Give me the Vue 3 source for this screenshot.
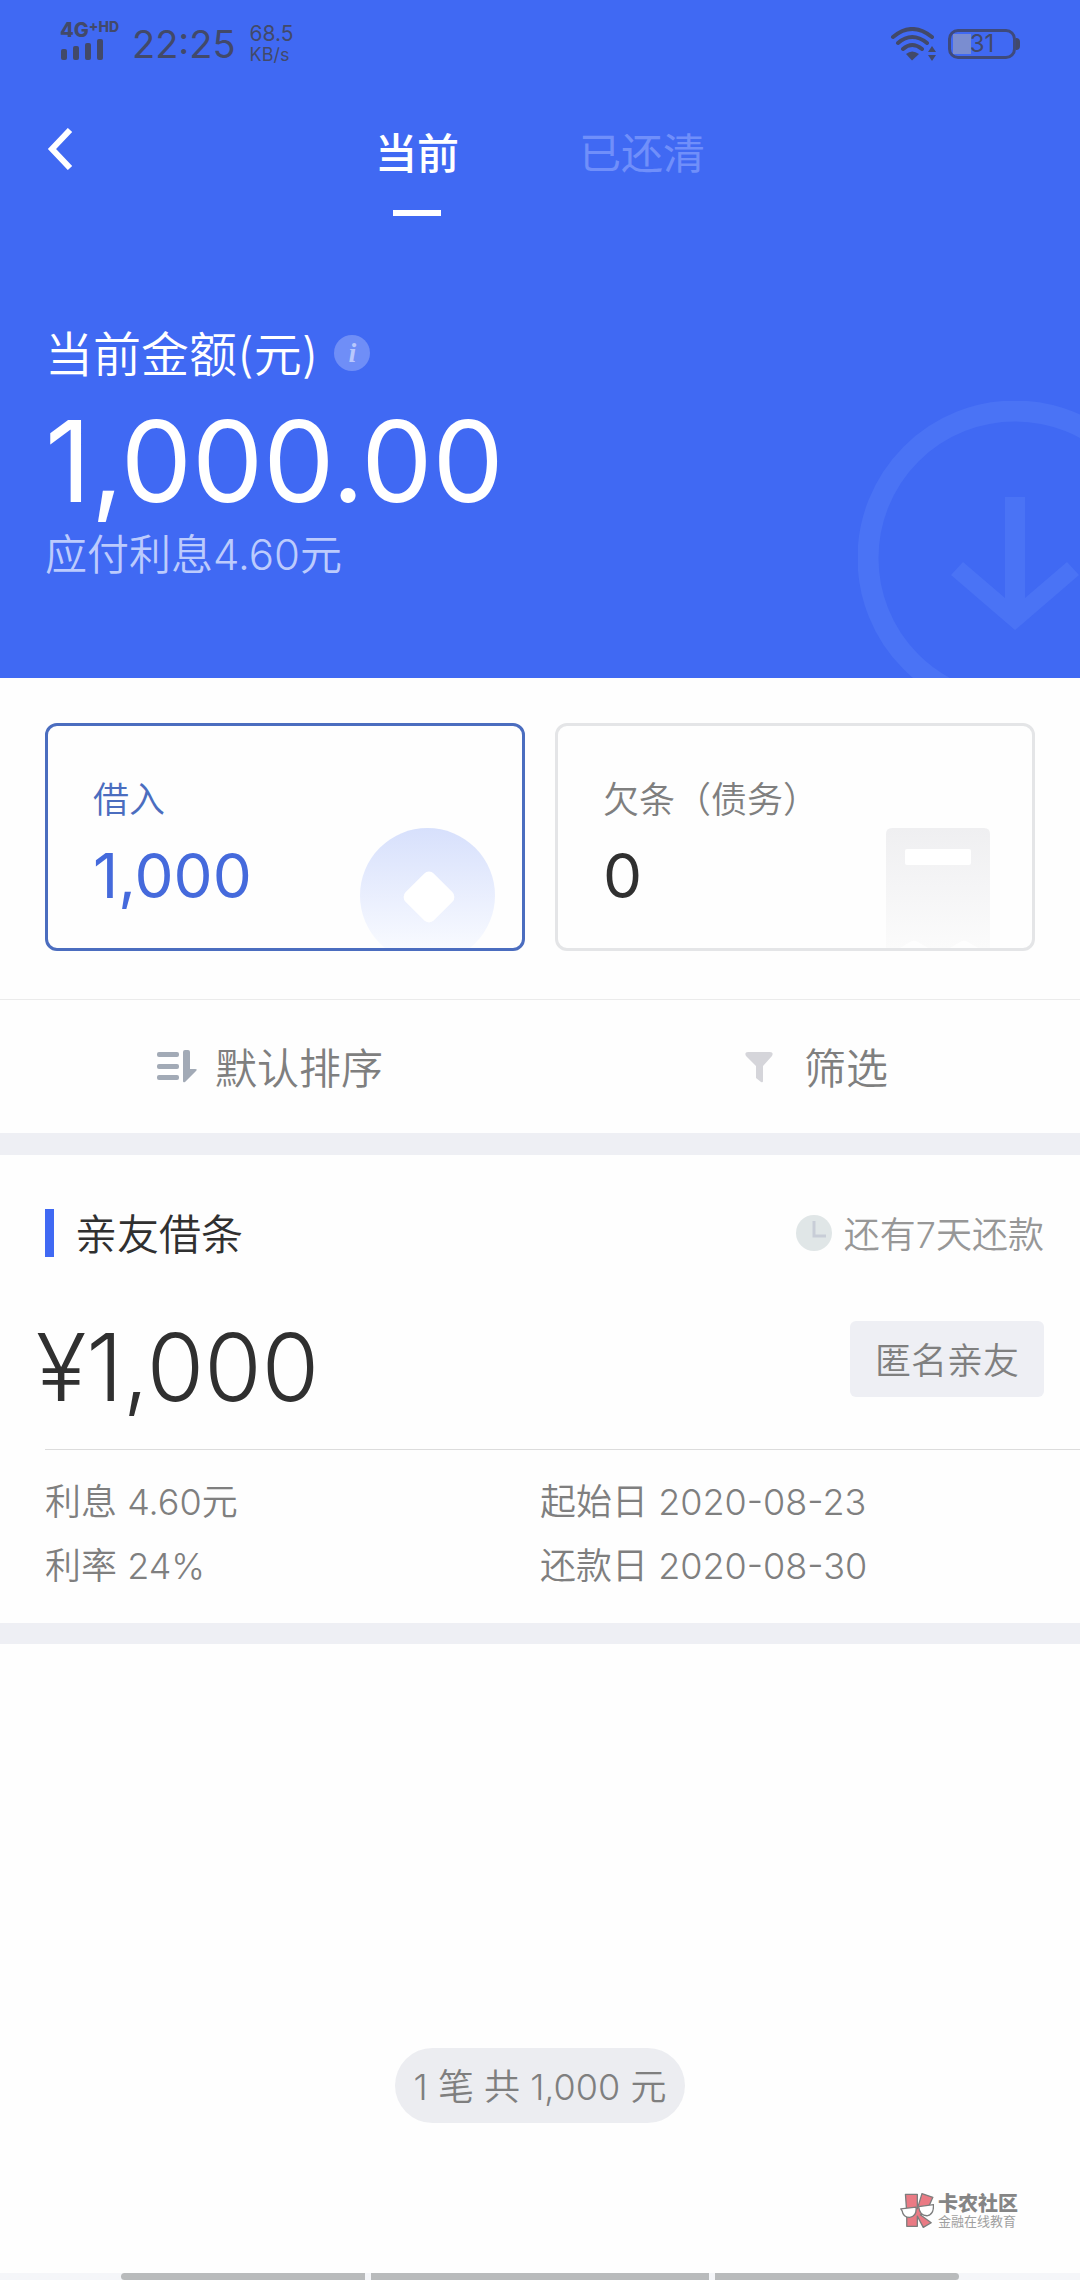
<script setup>
import { ref } from 'vue'

const tabs = ['当前', '已还清']
const activeTab = ref(0)

const cards = [
  { label: '借入', value: '1,000', art: 'coin' },
  { label: '欠条（债务）', value: '0', art: 'receipt' },
]
const activeCard = ref(0)

const details = ['利息 4.60元', '起始日 2020-08-23', '利率 24%', '还款日 2020-08-30']
</script>

<template>
  <div class="page">
    <header class="hero">
      <svg class="hero-mark" viewBox="0 0 222 277" aria-hidden="true">
        <circle cx="157" cy="157" r="147" fill="none" stroke="currentColor" stroke-width="21" />
        <path d="M147 96h20v101l42-36 12 13-64 55-64-55 12-13 42 36z" fill="currentColor" />
      </svg>

      <div class="status">
        <div class="status-left">
          <div class="carrier">
            <div class="network">4G<span class="network-sup">+HD</span></div>
            <svg width="44" height="21" viewBox="0 0 44 21" fill="currentColor" aria-hidden="true">
              <rect x="1" y="10" width="6" height="11" rx="2" />
              <rect x="13" y="7" width="6" height="14" rx="2" />
              <rect x="25" y="4" width="6" height="17" rx="2" />
              <rect x="37" y="0" width="6" height="21" rx="2" />
            </svg>
          </div>
          <span class="clock">22:25</span>
          <div class="speed"><span>68.5</span><span class="unit">KB/s</span></div>
        </div>
        <div class="status-right">
          <svg width="48" height="34" viewBox="0 0 48 34" fill="none" stroke="currentColor" stroke-width="4" stroke-linecap="round" aria-hidden="true">
            <path d="M3 10Q22 -6 42 10M8 16Q22 4 37 16M13 22Q22 14 32 22" />
            <path d="M16 27Q22 22 29 27L22 33.500z" fill="currentColor" stroke="none" />
            <path d="M42 19l4 6h-8zM42 34l4-6h-8z" fill="currentColor" stroke="none" />
          </svg>
          <div class="battery"><span class="battery-text">31</span></div>
        </div>
      </div>

      <nav class="nav">
        <button class="back" type="button" aria-label="返回">
          <svg width="26" height="42" viewBox="0 0 26 42" fill="none" stroke="#fff" stroke-width="6" aria-hidden="true">
            <path d="M23 2L5 21l18 19" />
          </svg>
        </button>
        <div class="tabs">
          <button
            v-for="(tab, i) in tabs"
            :key="tab"
            type="button"
            class="tab"
            :class="{ active: i === activeTab }"
            @click="activeTab = i"
          >{{ tab }}</button>
        </div>
      </nav>

      <div class="summary">
        <div class="summary-title">
          <span>当前金额(元)</span>
          <button class="info" type="button" aria-label="说明">i</button>
        </div>
        <div class="total">1,000.00</div>
        <div class="interest">应付利息4.60元</div>
      </div>
    </header>

    <section class="cards">
      <button
        v-for="(card, i) in cards"
        :key="card.art"
        type="button"
        class="card"
        :class="{ active: i === activeCard }"
        @click="activeCard = i"
      >
        <span class="card-text">
          <span class="card-label">{{ card.label }}</span>
          <span class="card-value">{{ card.value }}</span>
        </span>
        <svg v-if="card.art === 'coin'" class="art coin" width="135" height="120" viewBox="0 0 135 120" aria-hidden="true">
          <defs>
            <linearGradient id="coinFill" x1="0" y1="0" x2="0" y2="120" gradientUnits="userSpaceOnUse">
              <stop offset="0" stop-color="#d7e0fc" />
              <stop offset="1" stop-color="#f8faff" />
            </linearGradient>
          </defs>
          <circle cx="67.500" cy="67.500" r="67.500" fill="url(#coinFill)" />
          <rect x="49" y="49" width="40" height="40" rx="7" fill="#fff" transform="rotate(45 69 69)" />
        </svg>
        <svg v-else class="art receipt" width="104" height="120" viewBox="0 0 104 120" aria-hidden="true">
          <defs>
            <linearGradient id="receiptFill" x1="0" y1="0" x2="0" y2="1">
              <stop offset="0" stop-color="#efeff1" />
              <stop offset="1" stop-color="#fbfbfb" />
            </linearGradient>
          </defs>
          <path d="M6 0h92q6 0 6 6v114H92l-10-6q-4-3-8 0l-10 6H42l-10-6q-4-3-8 0l-10 6H0V6q0-6 6-6z" fill="url(#receiptFill)" />
          <rect x="19" y="21" width="66" height="16" rx="2" fill="#fff" />
        </svg>
      </button>
    </section>

    <section class="filters">
      <button type="button" class="filter">
        <svg width="40" height="34" viewBox="0 0 40 34" fill="#a2aab6" aria-hidden="true">
          <rect x="0" y="2" width="22" height="5" rx="2" />
          <rect x="0" y="14" width="22" height="5" rx="2" />
          <rect x="0" y="25" width="22" height="5" rx="2" />
          <path d="M26 2q0-2 2-2h3q2 0 2 2v17h5q3 0 1 2L28 32q-2 1-2-1z" />
        </svg>
        <span class="label">默认排序</span>
      </button>
      <button type="button" class="filter">
        <svg width="54" height="34" viewBox="0 0 54 34" fill="#d5d5da" aria-hidden="true">
          <path d="M16 2h22q4 0 2 4L31 16v15q0 2-2 1l-5-4V16L14 6q-2-4 2-4z" />
        </svg>
        <span class="label">筛选</span>
      </button>
    </section>

    <article class="loan">
      <div class="loan-head">
        <h2 class="loan-title">亲友借条</h2>
        <span class="due">
          <svg width="36" height="36" viewBox="0 0 36 36" aria-hidden="true">
            <circle cx="18" cy="18" r="18" fill="#e0e6e7" />
            <path d="M18 6v15h12" fill="none" stroke="#c8cdd7" stroke-width="3" />
          </svg>
          <span class="label">还有7天还款</span>
        </span>
      </div>
      <div class="loan-main">
        <span class="amount">¥1,000</span>
        <button type="button" class="friend">匿名亲友</button>
      </div>
      <div class="details">
        <span v-for="item in details" :key="item">{{ item }}</span>
      </div>
    </article>

    <footer class="footer">
      <div class="count">1 笔 共 1,000 元</div>
      <div class="brand">
        <svg width="34" height="35" viewBox="0 0 102 106" fill="#ea7a84" stroke="#7d7d7d" stroke-width="4" stroke-linejoin="round" aria-hidden="true">
          <path d="M16 4h36v44l14-46 33 11-20 45-18 8 33 24-24 14-18-34v31H20V60z" />
          <path d="M2 48l46-5q3 28-19 31Q9 74 6 54zM56 41l45-6q1 32-20 34-22 0-25-28z" fill="#fff" />
        </svg>
        <div class="brand-text">
          <strong>卡农社区</strong>
          <span>金融在线教育</span>
        </div>
      </div>
      <div class="gesture"><i class="side"></i><i class="mid"></i><i class="side"></i></div>
    </footer>
  </div>
</template>

<style>
body {
  margin: 0;
  background: #fefefe;
}
</style>

<style scoped>
.page {
  display: flex;
  flex-direction: column;
  min-height: 100vh;
  overflow: hidden;
  background: #fefefe;
  color: #7f7f7f;
  font-family: Inter, "Noto Sans CJK SC", sans-serif;
  font-size: 36px;
  font-weight: 350;
}

button {
  margin: 0;
  padding: 0;
  border: 0;
  background: none;
  color: inherit;
  font: inherit;
  cursor: pointer;
}

svg {
  display: block;
  flex: none;
}

.hero {
  position: relative;
  overflow: hidden;
  padding-bottom: 99px;
  background: #4069f3;
  color: #fff;
}

.hero-mark {
  position: absolute;
  right: 0;
  bottom: 0;
  width: 222px;
  height: 277px;
  color: #4a73f5;
}

.status {
  position: relative;
  display: flex;
  justify-content: space-between;
  align-items: center;
  height: 88px;
  padding: 0 60px;
  color: #424969;
}

.status-left,
.status-right {
  display: flex;
  align-items: center;
}

.carrier {
  width: 72px;
  padding-bottom: 8px;
}

.network {
  display: flex;
  font-size: 20px;
  font-weight: 800;
  line-height: 18px;
}

.network-sup {
  font-size: 14px;
  line-height: 12px;
}

.clock {
  font-size: 38px;
  font-weight: 400;
  line-height: 40px;
}

.speed {
  display: flex;
  flex-direction: column;
  margin-left: 14px;
  font-size: 21px;
  font-weight: 400;
  line-height: 21px;
}

.unit {
  font-size: 18px;
}

.status-right {
  gap: 10px;
}

.battery {
  position: relative;
  box-sizing: border-box;
  width: 68px;
  height: 30px;
  margin-right: 4px;
  border: 3px solid #3e4a7c;
  border-radius: 10px;
  background: linear-gradient(90deg, #7a8dd0 18px, transparent 18px) 2px 2px / 58px 20px no-repeat;
  text-align: center;
}

.battery::after {
  content: "";
  position: absolute;
  top: 6px;
  right: -7px;
  width: 4px;
  height: 12px;
  border-radius: 0 4px 4px 0;
  background: #424969;
}

.battery-text {
  display: block;
  font-size: 24px;
  font-weight: 400;
  line-height: 24px;
}

.nav {
  position: relative;
  display: flex;
  justify-content: center;
  padding-top: 42px;
}

.back {
  position: absolute;
  top: 40px;
  left: 47px;
}

.tabs {
  display: flex;
  gap: 120px;
}

.tab {
  display: flex;
  flex-direction: column;
  align-items: center;
  color: #708ffa;
  font-size: 42px;
  font-weight: 400;
  line-height: 48px;
}

.tab.active {
  color: #fff;
  font-weight: 500;
}

.tab::after {
  content: "";
  width: 48px;
  height: 6px;
  margin-top: 32px;
}

.tab.active::after {
  background: #fff;
}

.summary {
  position: relative;
  padding: 109px 45px 0;
}

.summary-title {
  display: flex;
  align-items: center;
  gap: 16px;
  font-size: 48px;
  line-height: 60px;
}

.info {
  width: 36px;
  height: 36px;
  margin-bottom: 4px;
  border-radius: 50%;
  background: #6f8ef7;
  color: #b9c8fd;
  font-family: "Liberation Serif", serif;
  font-size: 28px;
  font-style: italic;
  font-weight: 700;
  line-height: 36px;
}

.total {
  margin-top: 21px;
  font-size: 113px;
  font-weight: 400;
  line-height: 110px;
}

.interest {
  margin-top: 14px;
  color: #bccbfd;
  font-size: 42px;
  line-height: 49px;
}

.cards {
  display: flex;
  gap: 30px;
  padding: 45px 45px 48px;
}

.card {
  display: flex;
  flex: 1 1 0;
  justify-content: space-between;
  border: 3px solid #e4e5e7;
  border-radius: 12px;
  overflow: hidden;
  text-align: left;
}

.card.active {
  border-color: #4b6dbf;
  color: #4b6dbf;
}

.card-text {
  display: flex;
  flex-direction: column;
  gap: 22px;
  padding: 50px 0 42px 45px;
}

.card-label {
  line-height: 48px;
}

.card-value {
  color: #303030;
  font-size: 62px;
  font-weight: 400;
  line-height: 60px;
}

.card.active .card-value {
  color: #456adc;
}

.art {
  align-self: flex-end;
}

.coin {
  margin-right: 27px;
}

.receipt {
  margin-right: 42px;
}

.filters {
  display: flex;
  border-top: 1px solid #ebebeb;
  border-bottom: 22px solid #eeeff4;
}

.filter {
  display: flex;
  flex: 1 1 0;
  justify-content: center;
  align-items: center;
  gap: 18px;
  font-size: 42px;
  line-height: 129px;
}

.label {
  padding-top: 4px;
}

.loan {
  padding-top: 54px;
  border-bottom: 21px solid #eeeff4;
}

.loan-head {
  display: flex;
  justify-content: space-between;
  align-items: center;
  padding: 0 36px 0 45px;
}

.loan-title {
  margin: 0;
  padding: 4px 0 0 21px;
  border-left: 9px solid #4069f3;
  color: #303030;
  font-size: 42px;
  font-weight: 350;
  line-height: 44px;
}

.due {
  display: flex;
  align-items: center;
  gap: 12px;
  color: #979797;
  line-height: 44px;
}

.loan-main {
  display: flex;
  justify-content: space-between;
  align-items: flex-start;
  padding: 64px 36px 36px;
}

.amount {
  color: #303030;
  font-size: 93px;
  font-weight: 300;
  line-height: 92px;
}

.friend {
  padding: 4px 25px 0;
  border-radius: 6px;
  background: #eeeff4;
  line-height: 72px;
}

.details {
  display: grid;
  grid-template-columns: 495px 1fr;
  margin-left: 45px;
  padding: 20px 0 25px;
  border-top: 1px solid #dcdcdc;
  line-height: 64px;
}

.footer {
  display: flex;
  flex-direction: column;
  align-items: center;
  margin-top: auto;
}

.count {
  padding: 4px 19px 0;
  border-radius: 38px;
  background: #ecedf1;
  line-height: 71px;
}

.brand {
  display: flex;
  align-self: flex-end;
  gap: 4px;
  margin: 70px 62px 45px 0;
}

.brand-text {
  display: flex;
  flex-direction: column;
  color: #858585;
}

.brand-text strong {
  font-size: 20px;
  font-weight: 900;
  line-height: 22px;
}

.brand-text span {
  font-size: 13px;
  font-weight: 400;
  line-height: 13px;
  color: #a0a0a0;
}

.gesture {
  display: flex;
  align-self: stretch;
  justify-content: center;
  gap: 6px;
  background: #f5f6f9;
}

.gesture i {
  height: 7px;
  background: #b9bbbc;
}

.side {
  width: 244px;
}

.mid {
  width: 338px;
}

.side:first-child {
  border-radius: 4px 0 0 4px;
}

.side:last-child {
  border-radius: 0 4px 4px 0;
}
</style>
